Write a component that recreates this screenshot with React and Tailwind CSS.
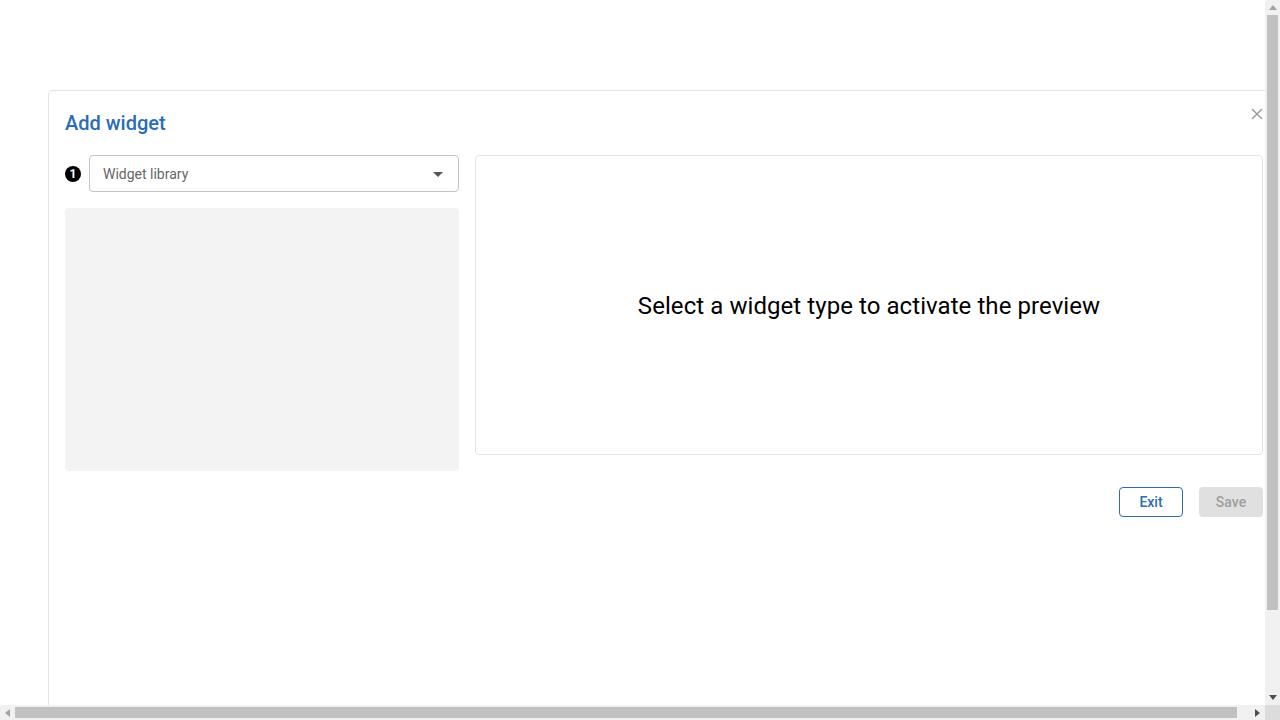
function Tri({ dir, color }) {
  if (dir === "left" || dir === "right") {
    return (
      <svg width="5" height="8" viewBox="0 0 5 8">
        <path d={dir === "left" ? "M5 0 L5 8 L0 4 Z" : "M0 0 L0 8 L5 4 Z"} fill={color} />
      </svg>
    );
  }
  return (
    <svg width="8" height="5" viewBox="0 0 8 5">
      <path d={dir === "up" ? "M0 5 L8 5 L4 0 Z" : "M0 0 L8 0 L4 5 Z"} fill={color} />
    </svg>
  );
}

function Page() {
  return (
    <div className="w-[1280px] h-[800px] bg-white pt-[90px] pl-[48px] shrink-0">
      <div className="w-[1232px] h-[710px] border border-[#e3e3e3] rounded-[4px] bg-white relative px-4 pt-[20px]">
        <button className="absolute right-[14px] top-[15px] w-[16px] h-[16px] flex items-center justify-center text-[#a0a0a0]">
          <svg width="12" height="12" viewBox="0 0 12 12" fill="none" stroke="currentColor" strokeWidth="1.6">
            <path d="M1 1 L11 11 M11 1 L1 11" />
          </svg>
        </button>
        <h2 className="text-[20px] leading-[24px] font-medium text-[#2b6cb5]">Add widget</h2>
        <div className="flex gap-4 mt-[20px]">
          <div className="w-[394px] flex flex-col gap-4">
            <div className="flex items-center gap-2">
              <div className="w-[16px] h-[16px] rounded-full bg-black text-white text-[12px] font-bold flex items-center justify-center leading-none">1</div>
              <div className="flex-1 h-[37px] border border-[#c4c4c4] rounded-[4px] flex items-center justify-between pl-[13px] pr-[15px] pt-[1px]">
                <span className="text-[14px] text-[#666]">Widget library</span>
                <svg width="10" height="5" viewBox="0 0 10 5"><path d="M0 0 L10 0 L5 5 Z" fill="#555" /></svg>
              </div>
            </div>
            <div className="h-[263px] bg-[#f3f3f3] rounded-[4px]" />
          </div>
          <div className="flex-1 flex flex-col">
            <div className="h-[300px] border border-[#e3e3e3] rounded-[4px] flex items-center justify-center pt-[2px]">
              <p className="text-[24px] text-black leading-[28px] tracking-[0.07px]">Select a widget type to activate the preview</p>
            </div>
            <div className="flex justify-end gap-4 mt-[32px]">
              <button className="w-[64px] h-[30px] border border-[#2b6cb5] rounded-[4px] text-[14px] font-medium text-[#2b6cb5]">Exit</button>
              <button className="w-[64px] h-[30px] bg-[#e0e0e0] rounded-[4px] text-[14px] font-medium text-[#9e9e9e]">Save</button>
            </div>
          </div>
        </div>
      </div>
    </div>
  );
}

export default function App() {
  return (
    <div className="w-[1280px] h-[720px] flex flex-col overflow-hidden" style={{ fontFamily: 'Roboto, "Liberation Sans", sans-serif' }}>
      <div className="flex h-[705px]">
        <div className="w-[1265px] h-[705px] overflow-hidden">
          <Page />
        </div>
        <div className="w-[15px] h-[705px] bg-[#f1f1f1] flex flex-col">
          <div className="h-[15px] flex items-center justify-center"><Tri dir="up" color="#a3a3a3" /></div>
          <div className="flex-1 px-[2px]">
            <div className="h-[595px] bg-[#c1c1c1]" />
          </div>
          <div className="h-[15px] flex items-center justify-center"><Tri dir="down" color="#505050" /></div>
        </div>
      </div>
      <div className="flex h-[15px]">
        <div className="w-[1265px] h-[15px] bg-[#f1f1f1] flex">
          <div className="w-[15px] flex items-center justify-center"><Tri dir="left" color="#a3a3a3" /></div>
          <div className="flex-1 py-[2px]">
            <div className="w-[1222px] h-full bg-[#c1c1c1]" />
          </div>
          <div className="w-[15px] flex items-center justify-center"><Tri dir="right" color="#505050" /></div>
        </div>
        <div className="w-[15px] h-[15px] bg-[#dcdcdc]" />
      </div>
    </div>
  );
}
